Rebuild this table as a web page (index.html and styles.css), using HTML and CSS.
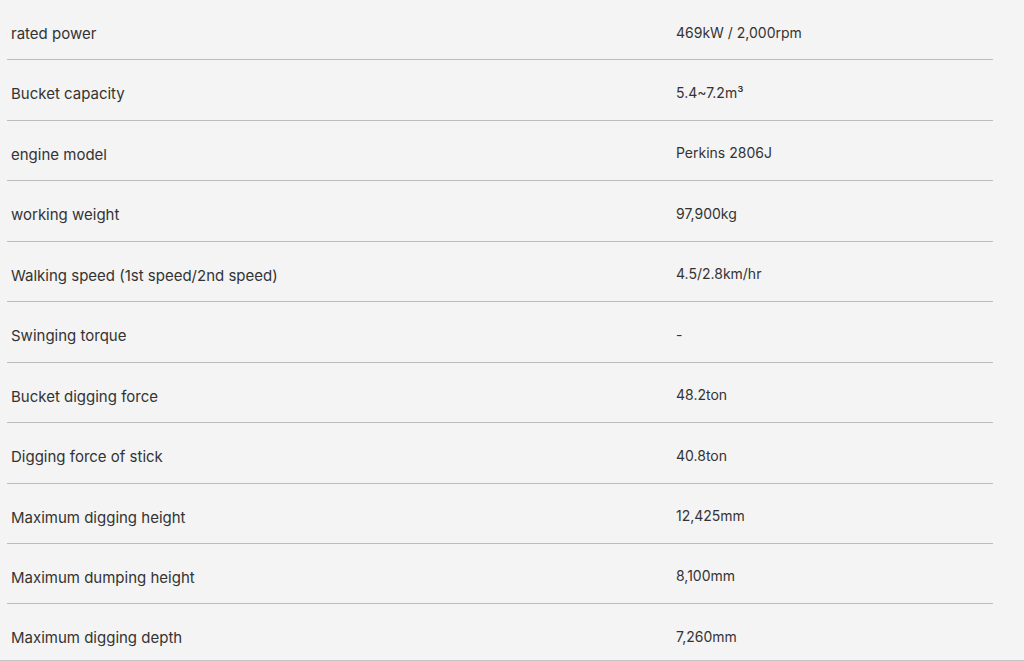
FILE: index.html
```html
<!DOCTYPE html>
<html lang="en">
<head>
<meta charset="utf-8">
<title>Specifications</title>
<link rel="stylesheet" href="styles.css">
</head>
<body>
<div class="spec">
  <div class="row"><div class="label">rated power</div><div class="value">469kW / 2,000rpm</div></div>
  <div class="row"><div class="label">Bucket capacity</div><div class="value">5.4~7.2m³</div></div>
  <div class="row"><div class="label">engine model</div><div class="value">Perkins 2806J</div></div>
  <div class="row"><div class="label">working weight</div><div class="value">97,900kg</div></div>
  <div class="row"><div class="label">Walking speed (1st speed/2nd speed)</div><div class="value">4.5/2.8km/hr</div></div>
  <div class="row"><div class="label">Swinging torque</div><div class="value">-</div></div>
  <div class="row"><div class="label">Bucket digging force</div><div class="value">48.2ton</div></div>
  <div class="row"><div class="label">Digging force of stick</div><div class="value">40.8ton</div></div>
  <div class="row"><div class="label">Maximum digging height</div><div class="value">12,425mm</div></div>
  <div class="row"><div class="label">Maximum dumping height</div><div class="value">8,100mm</div></div>
  <div class="row"><div class="label">Maximum digging depth</div><div class="value">7,260mm</div></div>
</div>
<div class="edge"></div>
</body>
</html>
```
FILE: styles.css
```css
html, body {
  margin: 0;
  padding: 0;
  background: #f4f4f4;
  overflow: hidden;
}
body {
  font-family: Inter, "Liberation Sans", Arial, sans-serif;
  color: #333333;
}
.spec {
  margin-left: 7px;
  width: 986px;
}
.row {
  display: flex;
  height: 59.44px;
  border-bottom: 1px solid #bcbcbc;
  line-height: 17px;
}
.label {
  width: 665px;
  padding: 25px 0 0 4px;
  flex: none;
  font-size: 15px;
}
.value {
  flex: 1;
  padding-top: 23.5px;
  font-size: 14px;
}
.edge {
  position: fixed;
  left: 0;
  right: 0;
  bottom: 0;
  height: 1px;
  background: #c4c4c4;
}
```
